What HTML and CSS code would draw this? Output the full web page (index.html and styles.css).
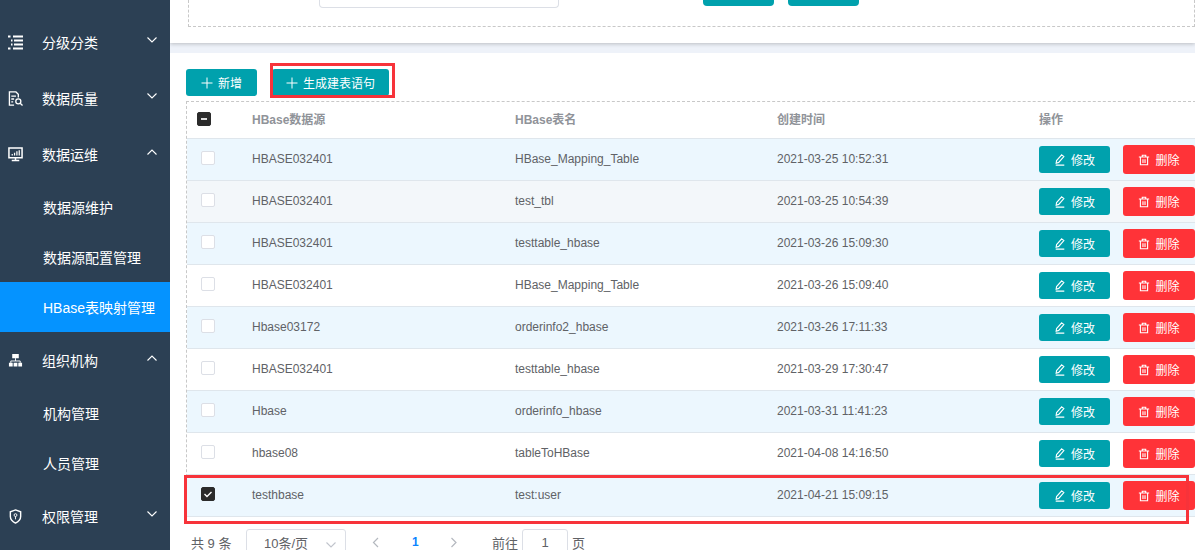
FILE: index.html
```html
<!DOCTYPE html>
<html>
<head>
  <title>HBase表映射管理</title>
  <link rel="stylesheet" href="styles.css">
</head>
<body>
  <svg class="defs" width="0" height="0">
    <symbol id="i-plus" viewBox="0 0 12 12"><path d="M6 .5v11M.5 6h11" fill="none" stroke="currentColor"/></symbol>
    <symbol id="i-edit" viewBox="0 0 14 14"><path d="M9 1l2.500 2-6 6.800-3 1 .5-3.200zM2 13h10" fill="none" stroke="currentColor" stroke-width="1.300"/></symbol>
    <symbol id="i-del" viewBox="0 0 14 14"><path d="M1 3.500h12M5 3.500V1.500h4v2M2.800 3.500v9h8.400v-9M5.800 6v4.500M8.200 6v4.500" fill="none" stroke="currentColor" stroke-width="1.300"/></symbol>
    <symbol id="i-down" viewBox="0 0 12 8"><path d="M1.500 1.500L6 6l4.500-4.500" fill="none" stroke="currentColor" stroke-width="1.100"/></symbol>
    <symbol id="i-up" viewBox="0 0 12 8"><path d="M1.500 6.500L6 2l4.500 4.500" fill="none" stroke="currentColor" stroke-width="1.100"/></symbol>
  </svg>

  <div class="layout">
    <div class="sidebar">
      <div class="menu-item">
        <svg class="menu-icon" viewBox="0 0 15 15"><path d="M0 1.500h2.500M5 1.500h10M3 5.500h1.500M6 5.500h9M3 9.500h1.500M6 9.500h9M0 13.500h2.500M5 13.500h10" fill="none" stroke="currentColor" stroke-width="2"/></svg>
        <span class="menu-label">分级分类</span>
        <svg class="arrow"><use href="#i-down"/></svg>
      </div>
      <div class="menu-item">
        <svg class="menu-icon" viewBox="0 0 16 16"><path d="M11 7V3.500L8.500 1H1.500v14h5M3.500 5.500h5M3.500 8.500h3M3.500 11.500h2" fill="none" stroke="currentColor" stroke-width="1.400"/><circle cx="11" cy="11" r="2.700" fill="none" stroke="currentColor" stroke-width="1.400"/><path d="M13 13l2.500 2.500" stroke="currentColor" stroke-width="1.400"/></svg>
        <span class="menu-label">数据质量</span>
        <svg class="arrow"><use href="#i-down"/></svg>
      </div>
      <div class="menu-item">
        <svg class="menu-icon" viewBox="0 0 16 16"><path d="M1 1h14v10.500H1zM8 11.500v2.500M4 14.500h8" fill="none" stroke="currentColor" stroke-width="1.600"/><path d="M4.500 9V7.500M7 9V6M9.500 9V4.500M12 9V3.500" stroke="currentColor" stroke-width="1.300"/></svg>
        <span class="menu-label">数据运维</span>
        <svg class="arrow"><use href="#i-up"/></svg>
      </div>
      <div class="sub-item">数据源维护</div>
      <div class="sub-item">数据源配置管理</div>
      <div class="sub-item active">HBase表映射管理</div>
      <div class="menu-item">
        <svg class="menu-icon" viewBox="0 0 16 16"><path d="M4.500 1h7v4.500h-7zM1 10.500h4v4H1zM6 10.500h4v4H6zM11 10.500h4v4h-4z" fill="currentColor"/><path d="M8 5.500v3M3 10.500v-2h10v2" fill="none" stroke="currentColor"/></svg>
        <span class="menu-label">组织机构</span>
        <svg class="arrow"><use href="#i-up"/></svg>
      </div>
      <div class="sub-item">机构管理</div>
      <div class="sub-item">人员管理</div>
      <div class="menu-item">
        <svg class="menu-icon" viewBox="0 0 16 16"><path d="M8 1l5.500 2v5c0 3-2.500 5.500-5.500 7-3-1.500-5.500-4-5.500-7V3z" fill="none" stroke="currentColor" stroke-width="1.500"/><circle cx="8" cy="6.500" r="1.500" fill="none" stroke="currentColor"/><path d="M8 8v3" stroke="currentColor"/></svg>
        <span class="menu-label">权限管理</span>
        <svg class="arrow"><use href="#i-down"/></svg>
      </div>
    </div>

    <div class="main">
      <div class="search-panel">
        <div class="search-box">
          <div class="search-input"></div>
          <div class="search-btns">
            <div class="search-btn"></div>
            <div class="search-btn"></div>
          </div>
        </div>
      </div>

      <div class="content">
        <div class="toolbar">
          <div class="btn btn-add"><svg class="btn-icon"><use href="#i-plus"/></svg>新增</div>
          <div class="btn btn-gen"><svg class="btn-icon"><use href="#i-plus"/></svg>生成建表语句<span class="mark mark-gen"></span></div>
        </div>

        <div class="table">
          <div class="row head">
            <div class="cell-check"><span class="check half"></span></div>
            <div class="cell c1">HBase数据源</div>
            <div class="cell c2">HBase表名</div>
            <div class="cell c3">创建时间</div>
            <div class="cell c4">操作</div>
          </div>

          <div class="row blue">
            <div class="cell-check"><span class="check"></span></div>
            <div class="cell c1">HBASE032401</div>
            <div class="cell c2">HBase_Mapping_Table</div>
            <div class="cell c3">2021-03-25 10:52:31</div>
            <div class="cell c4"><div class="btn btn-edit"><svg class="btn-icon"><use href="#i-edit"/></svg>修改</div><div class="btn btn-del"><svg class="btn-icon"><use href="#i-del"/></svg>删除</div></div>
          </div>
          <div class="row grey">
            <div class="cell-check"><span class="check"></span></div>
            <div class="cell c1">HBASE032401</div>
            <div class="cell c2">test_tbl</div>
            <div class="cell c3">2021-03-25 10:54:39</div>
            <div class="cell c4"><div class="btn btn-edit"><svg class="btn-icon"><use href="#i-edit"/></svg>修改</div><div class="btn btn-del"><svg class="btn-icon"><use href="#i-del"/></svg>删除</div></div>
          </div>
          <div class="row blue">
            <div class="cell-check"><span class="check"></span></div>
            <div class="cell c1">HBASE032401</div>
            <div class="cell c2">testtable_hbase</div>
            <div class="cell c3">2021-03-26 15:09:30</div>
            <div class="cell c4"><div class="btn btn-edit"><svg class="btn-icon"><use href="#i-edit"/></svg>修改</div><div class="btn btn-del"><svg class="btn-icon"><use href="#i-del"/></svg>删除</div></div>
          </div>
          <div class="row">
            <div class="cell-check"><span class="check"></span></div>
            <div class="cell c1">HBASE032401</div>
            <div class="cell c2">HBase_Mapping_Table</div>
            <div class="cell c3">2021-03-26 15:09:40</div>
            <div class="cell c4"><div class="btn btn-edit"><svg class="btn-icon"><use href="#i-edit"/></svg>修改</div><div class="btn btn-del"><svg class="btn-icon"><use href="#i-del"/></svg>删除</div></div>
          </div>
          <div class="row blue">
            <div class="cell-check"><span class="check"></span></div>
            <div class="cell c1">Hbase03172</div>
            <div class="cell c2">orderinfo2_hbase</div>
            <div class="cell c3">2021-03-26 17:11:33</div>
            <div class="cell c4"><div class="btn btn-edit"><svg class="btn-icon"><use href="#i-edit"/></svg>修改</div><div class="btn btn-del"><svg class="btn-icon"><use href="#i-del"/></svg>删除</div></div>
          </div>
          <div class="row">
            <div class="cell-check"><span class="check"></span></div>
            <div class="cell c1">HBASE032401</div>
            <div class="cell c2">testtable_hbase</div>
            <div class="cell c3">2021-03-29 17:30:47</div>
            <div class="cell c4"><div class="btn btn-edit"><svg class="btn-icon"><use href="#i-edit"/></svg>修改</div><div class="btn btn-del"><svg class="btn-icon"><use href="#i-del"/></svg>删除</div></div>
          </div>
          <div class="row blue">
            <div class="cell-check"><span class="check"></span></div>
            <div class="cell c1">Hbase</div>
            <div class="cell c2">orderinfo_hbase</div>
            <div class="cell c3">2021-03-31 11:41:23</div>
            <div class="cell c4"><div class="btn btn-edit"><svg class="btn-icon"><use href="#i-edit"/></svg>修改</div><div class="btn btn-del"><svg class="btn-icon"><use href="#i-del"/></svg>删除</div></div>
          </div>
          <div class="row">
            <div class="cell-check"><span class="check"></span></div>
            <div class="cell c1">hbase08</div>
            <div class="cell c2">tableToHBase</div>
            <div class="cell c3">2021-04-08 14:16:50</div>
            <div class="cell c4"><div class="btn btn-edit"><svg class="btn-icon"><use href="#i-edit"/></svg>修改</div><div class="btn btn-del"><svg class="btn-icon"><use href="#i-del"/></svg>删除</div></div>
          </div>
          <div class="row blue">
            <div class="cell-check"><span class="check checked">
              <svg viewBox="0 0 14 14" width="14" height="14"><path d="M3.500 7l2.500 2.500 4.500-4.500" fill="none" stroke="#fff" stroke-width="1.400"/></svg>
            </span></div>
            <div class="cell c1">testhbase</div>
            <div class="cell c2">test:user</div>
            <div class="cell c3">2021-04-21 15:09:15</div>
            <div class="cell c4"><div class="btn btn-edit"><svg class="btn-icon"><use href="#i-edit"/></svg>修改</div><div class="btn btn-del"><svg class="btn-icon"><use href="#i-del"/></svg>删除</div></div>
            <span class="mark mark-row"></span>
          </div>
        </div>

        <div class="pager">
          <span class="total">共 9 条</span>
          <div class="size-select">10条/页<svg class="size-arrow"><use href="#i-down"/></svg></div>
          <svg class="pg-arrow first"><path d="M6 1L1.500 5.500 6 10" fill="none" stroke="currentColor" stroke-width="1.200"/></svg>
          <span class="pg-num">1</span>
          <svg class="pg-arrow"><path d="M1.500 1L6 5.500 1.500 10" fill="none" stroke="currentColor" stroke-width="1.200"/></svg>
          <span class="goto">前往</span>
          <div class="goto-input">1</div>
          <span class="goto-unit">页</span>
        </div>
      </div>
    </div>
  </div>
</body>
</html>
```

FILE: styles.css
```css
html, body {
  margin: 0;
  height: 550px;
  overflow: hidden;
  background: #fff;
  font-family: "Liberation Sans", "Noto Sans CJK SC", Arial, sans-serif;
}

.defs {
  display: block;
  height: 0;
}

.layout {
  display: flex;
  width: 1195px;
  height: 550px;
  overflow: hidden;
}

/* left menu */
.sidebar {
  flex: 0 0 170px;
  box-sizing: border-box;
  padding-top: 14px;
  background-color: #2c4054;
  color: #fff;
  font-size: 14px;
}

.menu-item {
  display: flex;
  align-items: center;
  height: 56px;
  padding-left: 8px;
}

.menu-icon {
  width: 15px;
  height: 15px;
  margin-right: 19px;
}

.menu-label {
  flex: 1;
}

.arrow {
  width: 12px;
  height: 8px;
  margin-right: 12px;
  margin-top: -5px;
}

.sub-item {
  display: flex;
  align-items: center;
  height: 50px;
  padding-left: 43px;
}

.sub-item.active {
  background-color: #0593ff;
}

/* main */
.main {
  flex: 0 0 1025px;
  min-width: 0;
  overflow: hidden;
}

.search-panel {
  box-sizing: border-box;
  height: 43px;
  padding-left: 18px;
  background: #fff;
  box-shadow: 0 1px 4px rgba(0,0,0,0.22);
  position: relative;
}

.search-box {
  box-sizing: border-box;
  height: 27px;
  border: 1px dashed #c8c8c8;
  border-top: none;
  display: flex;
  align-items: flex-start;
}

.search-input {
  box-sizing: border-box;
  width: 240px;
  height: 8px;
  margin-left: 130px;
  border: 1px solid #dcdfe6;
  border-top: none;
  border-radius: 0 0 4px 4px;
}

.search-btns {
  display: flex;
  gap: 14px;
  margin-left: 144px;
}

.search-btn {
  width: 71px;
  height: 6px;
  background-color: #00a1ad;
  border-radius: 0 0 4px 4px;
}

.content {
  margin-top: 10px;
  padding: 16px 0 0 16px;
  background: #fff;
  height: 481px;
  box-shadow: 0 -10px 0 #eef2f9;
}

.toolbar {
  display: flex;
  gap: 15px;
  height: 32px;
}

.btn {
  display: flex;
  align-items: center;
  justify-content: center;
  box-sizing: border-box;
  height: 27px;
  color: #fff;
  font-size: 12px;
  border-radius: 3px;
  white-space: nowrap;
}

.btn-icon {
  width: 12px;
  height: 12px;
  margin-right: 5px;
}

.btn-add {
  width: 71px;
  background-color: #00a1ad;
}

.btn-gen {
  position: relative;
  width: 117px;
  background-color: #00a1ad;
}

.btn-edit {
  width: 71px;
  background-color: #00a1ad;
}

.btn-del {
  width: 72px;
  height: 29px;
  margin-left: 13px;
  background-color: #ff3338;
}

/* table */
.table {
  width: 1009px;
  border-top: 1px dashed #c8c8c8;
  border-left: 1px dashed #c8c8c8;
  margin-bottom: 0;
}

.row {
  position: relative;
  display: flex;
  align-items: center;
  box-sizing: border-box;
  height: 42px;
  padding-bottom: 2px;
  border-bottom: 1px solid #dfe6ec;
  font-size: 12px;
  color: #606266;
}

.row.head {
  height: 37px;
  padding-bottom: 4px;
  font-weight: bold;
  color: #909399;
}

.row.blue {
  background-color: #ecf7fe;
}

.row.grey {
  background-color: #f3f7fa;
}

.cell-check {
  flex: 0 0 65px;
  box-sizing: border-box;
  padding-left: 14px;
  display: flex;
}

.c1 { flex: 0 0 263px; }
.c2 { flex: 0 0 262px; }
.c3 { flex: 0 0 262px; }
.c4 { display: flex; align-items: center; }

.row .c4 .btn {
  margin-top: 2px;
}

.check {
  box-sizing: border-box;
  display: block;
  width: 14px;
  height: 14px;
  margin-bottom: 2px;
  background: #fff;
  border: 1px solid #dcdfe6;
  border-radius: 2px;
}

.check.half,
.check.checked {
  background: #2b2b2b;
  border-color: #2b2b2b;
}

.check.half {
  margin: 2px 0 0 -4px;
}

.check.half::after {
  content: "";
  display: block;
  width: 6px;
  height: 2px;
  margin: 5px auto 0;
  background: #ddd;
}

.check.checked svg {
  display: block;
  margin: -1px;
}

/* red marks drawn over the screenshot */
.mark {
  position: absolute;
  box-sizing: border-box;
  border: 3px solid #f7333a;
  pointer-events: none;
}

.mark-gen {
  left: -2px;
  top: -6px;
  width: 125px;
  height: 35px;
}

.mark-row {
  left: -3px;
  top: 0;
  width: 1005px;
  height: 49px;
}

/* pager */
.pager {
  display: flex;
  align-items: center;
  height: 26px;
  margin-top: 12px;
  padding-left: 5px;
  font-size: 13px;
  color: #606266;
}

.total {
  width: 55px;
}

.size-select {
  box-sizing: border-box;
  display: flex;
  align-items: center;
  width: 100px;
  height: 26px;
  padding-left: 17px;
  border: 1px solid #dcdfe6;
  border-radius: 3px;
  position: relative;
}

.size-arrow {
  position: absolute;
  right: 8px;
  top: 11px;
  width: 12px;
  height: 8px;
  color: #c0c4cc;
}

.pg-arrow {
  width: 8px;
  height: 11px;
  color: #b4b8bf;
}

.pg-arrow.first {
  margin-left: 26px;
}

.pg-num {
  width: 8px;
  margin: 0 30px 0 32px;
  color: #0a84ff;
  font-weight: bold;
  font-size: 12px;
}

.goto {
  margin-left: 34px;
  width: 30px;
}

.goto-input {
  box-sizing: border-box;
  width: 46px;
  height: 26px;
  line-height: 26px;
  text-align: center;
  border: 1px solid #dcdfe6;
  border-radius: 3px;
}

.goto-unit {
  margin-left: 4px;
}
```
